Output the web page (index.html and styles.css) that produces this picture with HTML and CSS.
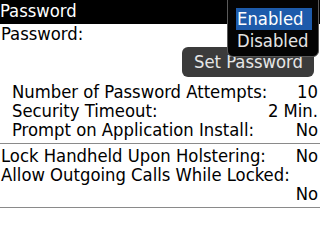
FILE: index.html
```html
<!DOCTYPE html>
<html>
<head>
<meta charset="utf-8">
<link rel="stylesheet" href="styles.css">
</head>
<body>
<div class="screen">
  <div class="titlebar">Password</div>
  <div class="row"><span>Password:</span></div>
  <div class="btnrow"><div class="btn">Set Password</div></div>
  <div class="group">
    <div class="row indent"><span>Number of Password Attempts:</span><span class="val">10</span></div>
    <div class="row indent"><span>Security Timeout:</span><span class="val">2 Min.</span></div>
    <div class="row indent"><span>Prompt on Application Install:</span><span class="val">No</span></div>
  </div>
  <div class="group">
    <div class="row"><span>Lock Handheld Upon Holstering:</span><span class="val">No</span></div>
    <div class="row"><span>Allow Outgoing Calls While Locked:</span></div>
    <div class="row end"><span class="val">No</span></div>
  </div>
  <div class="popup">
    <div class="opt sel">Enabled</div>
    <div class="opt">Disabled</div>
  </div>
</div>
</body>
</html>
```
FILE: styles.css
```css
html, body {
  margin: 0;
  padding: 0;
  background: #fff;
}
.screen {
  position: relative;
  width: 320px;
  height: 240px;
  overflow: hidden;
  font-family: "DejaVu Sans Condensed", "DejaVu Sans", sans-serif;
  font-size: 18.3px;
  color: #000;
  background: #fff;
}
.titlebar {
  height: 24px;
  line-height: 22px;
  background: #000;
  color: #fff;
  padding-left: 0;
}
.row {
  display: flex;
  justify-content: space-between;
  line-height: 19px;
  height: 19px;
  padding-left: 1px;
  padding-right: 2px;
  white-space: nowrap;
}
.titlebar + .row {
  height: 20px;
  line-height: 20px;
}
.row.indent {
  padding-left: 12px;
}
.row.end {
  justify-content: flex-end;
}
.btnrow {
  display: flex;
  justify-content: flex-end;
  padding: 3px 6px 0 0;
  margin-bottom: 5px;
}
.btn {
  width: 120px;
  height: 30px;
  line-height: 30px;
  padding-left: 12px;
  border-radius: 6px;
  background: #3b3b3b;
  color: #e6e6e6;
}
.group {
  border-bottom: 1px solid #8a8a8a;
  padding-bottom: 4px;
}
.group + .group {
  padding-top: 2px;
}
.popup {
  position: absolute;
  left: 227px;
  top: -6px;
  width: 82px;
  padding: 13px 0 4px 8px;
  background: #040404;
  border: 1px solid #5a5a5a;
  border-radius: 6px;
  color: #e4e4e4;
}
.opt {
  width: 75px;
  height: 22px;
  line-height: 21px;
  padding-left: 1px;
}
.opt.sel {
  background: #1d5bab;
  color: #fff;
}
```
